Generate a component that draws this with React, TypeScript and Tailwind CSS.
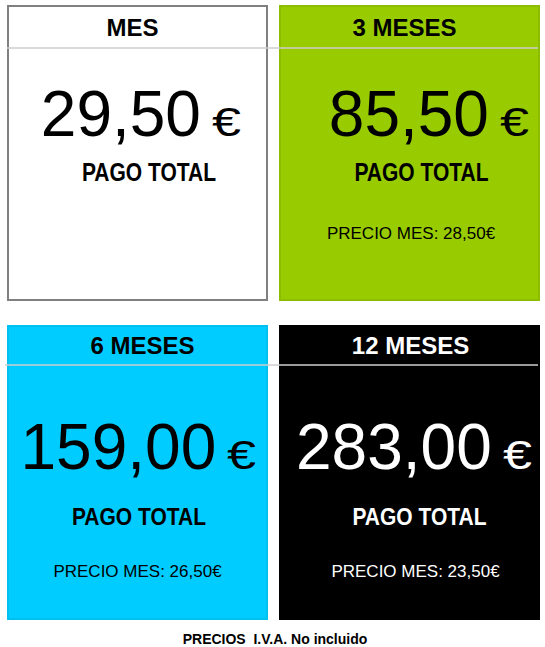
import React from "react";

type CardProps = {
  cls: string;
  title: string;
  headerCls: string;
  price: string;
  priceCls: string;
  pagoCls: string;
  precio?: string;
  precioCls?: string;
};

function Card(p: CardProps) {
  return (
    <div className={`border-2 ${p.cls}`}>
      <div className={`flex items-center justify-center text-[24px] font-bold leading-none ${p.headerCls}`}>
        {p.title}
      </div>
      <div className={`flex items-baseline justify-center leading-none ${p.priceCls}`}>
        <span className="text-[64px]">{p.price}</span>
        <span className="ml-[11px] origin-left scale-x-[1.3] text-[40px]">€</span>
      </div>
      <div className={`text-center text-[21px] font-bold leading-none ${p.pagoCls}`}>PAGO TOTAL</div>
      {p.precio && (
        <div className={`text-center text-[17px] leading-none ${p.precioCls}`}>{p.precio}</div>
      )}
    </div>
  );
}

export default function App() {
  return (
    <div className="h-[647px] w-[545px] overflow-hidden bg-white font-['Liberation_Sans',Arial,sans-serif] text-black">
      <div className="relative grid grid-cols-[261px_261px] gap-x-[11px] pl-[7px] pt-[5px]">
        <Card
          cls="h-[296px] bg-white border-[#808080] text-black"
          title="MES"
          headerCls="h-[41px] pr-[10px]"
          price="29,50"
          priceCls="mt-[34px]"
          pagoCls="mt-[16px] pl-[23px] scale-y-[1.2]"
        />
        <Card
          cls="h-[296px] bg-[#99cc00] border-[#8cbd00] text-black"
          title="3 MESES"
          headerCls="h-[41px] pr-[10px]"
          price="85,50"
          priceCls="mt-[34px] pl-[32px]"
          pagoCls="mt-[16px] pl-[24px] scale-y-[1.2]"
          precio="PRECIO MES: 28,50€"
          precioCls="mt-[42px] pl-[3px]"
        />
        <div className="absolute left-[7px] top-[47px] h-[2px] w-[531px] bg-[rgba(205,205,205,0.75)]" />
      </div>

      <div className="relative mt-[24px] grid grid-cols-[261px_261px] gap-x-[11px] pl-[7px]">
        <Card
          cls="h-[295px] bg-[#00ccff] border-[#00c0f0] text-black"
          title="6 MESES"
          headerCls="h-[38px] pl-[10px]"
          price="159,00"
          priceCls="mt-[50px] pr-[5px]"
          pagoCls="mt-[27px] pl-[3px] scale-y-[1.1]"
          precio="PRECIO MES: 26,50€"
          precioCls="mt-[36px]"
        />
        <Card
          cls="h-[295px] bg-black border-black text-white"
          title="12 MESES"
          headerCls="h-[38px] pl-[2px]"
          price="283,00"
          priceCls="mt-[50px] pl-[2px]"
          pagoCls="mt-[27px] pl-[20px] scale-y-[1.1]"
          precio="PRECIO MES: 23,50€"
          precioCls="mt-[36px] pl-[12px]"
        />
        <div className="absolute left-[5px] top-[39px] h-[2px] w-[533px] bg-[rgba(205,205,205,0.75)]" />
      </div>

      <div className="mt-[12px] whitespace-pre pl-[5px] text-center text-[14px] font-bold leading-none">
        {"PRECIOS  I.V.A. No incluido"}
      </div>
    </div>
  );
}
